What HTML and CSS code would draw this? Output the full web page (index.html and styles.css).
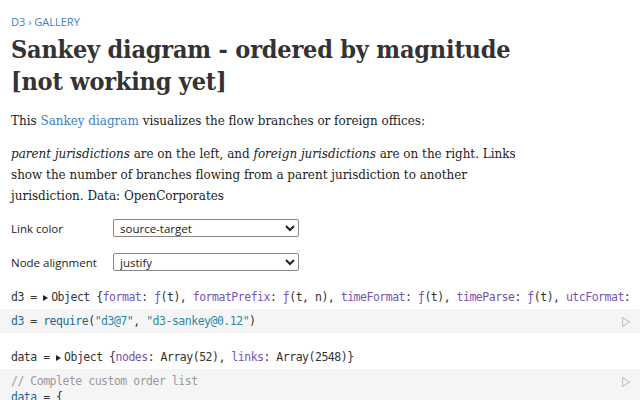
FILE: index.html
```html
<!DOCTYPE html>
<html>
<head>
<meta charset="utf-8">
<link rel="stylesheet" href="styles.css">
</head>
<body>
<main class="page">
  <nav class="crumbs"><a href="#">D3</a> › <a href="#">GALLERY</a></nav>
  <h1 class="title">Sankey diagram - ordered by magnitude<br>[not working yet]</h1>
  <p class="para">This <a href="#">Sankey diagram</a> visualizes the flow branches or foreign offices:</p>
  <p class="para"><em>parent jurisdictions</em> are on the left, and <em>foreign jurisdictions</em> are on the right. Links show the number of branches flowing from a parent jurisdiction to another jurisdiction. Data: OpenCorporates</p>

  <form class="inputs">
    <div class="field">
      <label class="label">Link color</label>
      <select class="select"><option>source-target</option></select>
    </div>
    <div class="field">
      <label class="label">Node alignment</label>
      <select class="select"><option>justify</option></select>
    </div>
  </form>

  <div class="out first">d3 = <span class="tri"></span>Object {<span class="k">format</span>: <span class="f">ƒ</span>(t), <span class="k">formatPrefix</span>: <span class="f">ƒ</span>(t, n), <span class="k">timeFormat</span>: <span class="f">ƒ</span>(t), <span class="k">timeParse</span>: <span class="f">ƒ</span>(t), <span class="k">utcFormat</span>: <span class="f">ƒ</span>(t), <span class="k">utcParse</span>: <span class="f">ƒ</span>(t)}</div>
  <div class="cell">
    <div class="code"><span class="v">d3</span> = <span class="fn">require</span>(<span class="s">"d3@7"</span>, <span class="s">"d3-sankey@0.12"</span>)</div>
    <svg class="run" width="10" height="12" viewBox="0 0 10 12"><path d="M1.5 1.5 L8.5 6 L1.5 10.5 Z" fill="none" stroke="#c9c9c9" stroke-width="1.3" stroke-linejoin="round"/></svg>
  </div>

  <div class="out gap">data = <span class="tri"></span>Object {<span class="k">nodes</span>: Array(52), <span class="k">links</span>: Array(2548)}</div>
  <div class="cell">
    <div class="code"><span class="c">// Complete custom order list</span><br><span class="v">data</span> = {</div>
    <svg class="run" width="10" height="12" viewBox="0 0 10 12"><path d="M1.5 1.5 L8.5 6 L1.5 10.5 Z" fill="none" stroke="#c9c9c9" stroke-width="1.3" stroke-linejoin="round"/></svg>
  </div>
</main>
</body>
</html>
```
FILE: styles.css
```css
html, body { margin: 0; padding: 0; background: #fff; }
body { overflow: hidden; width: 640px; height: 400px; }
.page { padding: 14px 0 0 0; }
.crumbs { margin: 0 11px; font-family: "Open Sans", "Noto Sans", sans-serif; font-size: 11px; line-height: 16px; color: #3b82c4; }
.crumbs a { color: #3b82c4; text-decoration: none; }
.title { margin: 4px 11px 0; font-family: "DejaVu Serif Condensed", "DejaVu Serif", serif; font-stretch: condensed; font-weight: bold; font-size: 25px; line-height: 32px; color: #333; letter-spacing: -0.2px; }
.para { margin: 12px 11px 0; max-width: 515px; font-family: "DejaVu Serif Condensed", "DejaVu Serif", serif; font-stretch: condensed; font-size: 13.3px; line-height: 21px; color: #1b1e23; }
.para a { color: #3b82c4; text-decoration: none; }
.inputs { margin: 13px 11px 0; display: flex; flex-direction: column; gap: 16px; }
.field { display: flex; align-items: center; height: 18px; }
.label { width: 102px; font-family: "Open Sans", "Noto Sans", sans-serif; font-size: 11.5px; color: #222; }
.select { width: 186px; height: 18px; font-family: "Open Sans", "Noto Sans", sans-serif; font-size: 11.5px; padding: 0 2px; border: 1px solid #888; border-radius: 2px; background: #fff; color: #222; }
.out, .code { font-family: "DejaVu Sans Mono", monospace; font-size: 11.5px; line-height: 16px; white-space: pre; letter-spacing: -0.49px; color: #333; }
.out { margin: 0 11px; overflow: hidden; }
.out.first { margin-top: 18px; }
.out.gap { margin-top: 16px; }
.tri { display: inline-block; width: 0; height: 0; border-left: 5px solid #222; border-top: 3.5px solid transparent; border-bottom: 3.5px solid transparent; margin: 0 3px 0 0; vertical-align: 0; }
.k { color: #7454b4; }
.f { color: #7454b4; }
.cell { margin-top: 4px; background: #f5f5f5; display: flex; justify-content: space-between; padding: 4px 9px 4px 11px; }
.v { color: #23689b; }
.fn { color: #23689b; }
.s { color: #2a8aa8; }
.c { color: #9a9a9a; }
.run { margin-top: 3px; }
```
